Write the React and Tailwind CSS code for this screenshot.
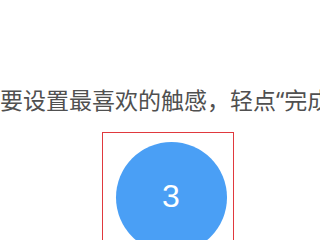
export default function App() {
  return (
    <div className="w-[320px] h-[240px] overflow-hidden bg-white relative" style={{ fontFamily: '"Noto Sans", "Noto Sans CJK SC", sans-serif' }}>
      <div className="pt-[86px] whitespace-nowrap text-[23px] leading-[28px] text-[#505050]">
        要设置最喜欢的触感，轻点“完成”
      </div>
      <div className="ml-[102px] mt-[18px] w-[132px] h-[140px] border border-[#e0393e] pl-[13px] pt-[9px]">
        <div className="w-[111px] h-[111px] rounded-full bg-[#4a9ff5] flex items-center justify-center">
          <span className="text-white text-[32px] leading-none -mt-[3px] -ml-[1px]" style={{ fontFamily: '"Liberation Sans", sans-serif' }}>3</span>
        </div>
      </div>
    </div>
  );
}
